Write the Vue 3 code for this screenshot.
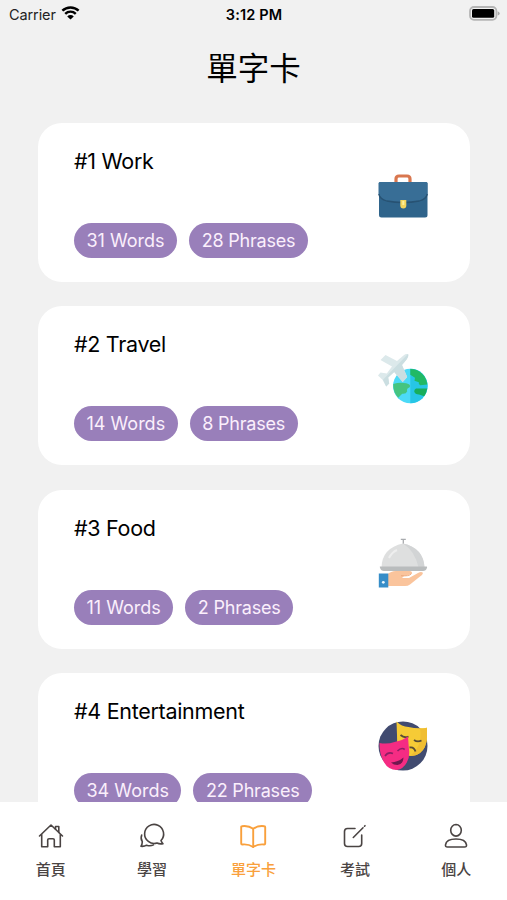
<template>
  <div class="screen">
    <header class="status-bar">
      <div class="status-bar__carrier">
        <span>Carrier</span>
        <svg class="status-bar__wifi" viewBox="0 0 18 14">
          <path d="M1.3 5.3a11.2 11.2 0 0 1 15.4 0" />
          <path d="M4 8.2a7.2 7.2 0 0 1 10 0" />
          <path class="status-bar__dot" d="M9 13.6 5.9 10.7a4.4 4.4 0 0 1 6.2 0z" />
        </svg>
      </div>
      <span class="status-bar__time">3:12 PM</span>
      <svg class="status-bar__battery" viewBox="0 0 31 15">
        <rect x="1" y="1" width="26.4" height="12.8" rx="4" fill="#f2f2f2" stroke="#b5b5b5" stroke-width="1.8" />
        <rect x="3" y="3" width="22.2" height="8.8" rx="1.6" fill="#000" />
        <path d="M28.7 5.2q2 .7 2 2.2t-2 2.2z" fill="#aaa" />
      </svg>
    </header>

    <h1 class="page-title">單字卡</h1>

    <main class="card-list">
      <article v-for="(card, index) in cards" :key="card.name" class="card">
        <div class="card__body">
          <h2 class="card__name">#{{ index + 1 }} {{ card.name }}</h2>
          <div class="card__tags">
            <span class="tag">{{ card.words }} Words</span>
            <span class="tag tag--phrases">{{ card.phrases }} Phrases</span>
          </div>
        </div>

        <svg v-if="card.icon === 'work'" class="card__icon" viewBox="0 0 50 50">
          <path d="M18 11V8q0-3 3-3h8q3 0 3 3v3" fill="none" stroke="#d9774f" stroke-width="3.2" />
          <path d="M2 11h46q1.5 0 1.5 1.5V44q0 2.5-2.5 2.5H3.5Q1 46.5 1 44V12.5Q1 11 2 11z" fill="#2f648b" />
          <path d="M2 11h46q1.5 0 1.5 1.5V23q-1 5-8 7-15 3-33 0-7-2-8-7V12.5Q.5 11 2 11z" fill="#386e96" />
          <path d="M.8 23q1 5 8 7 16 3 32.5 0 7-2 8-7" fill="none" stroke="#275273" stroke-width="1.3" />
          <path d="M22.3 29h6v5.5q0 3-3 3t-3-3z" fill="#f3d45c" />
          <path d="M24.3 30h2v4h-2z" fill="#fff09a" />
        </svg>

        <svg v-else-if="card.icon === 'travel'" class="card__icon" viewBox="0 0 50 50">
          <circle cx="32.3" cy="32" r="17.3" fill="#4cdaf7" />
          <path d="M32.3 14.7a17.3 17.3 0 0 1 0 34.6z" fill="#27c6e6" />
          <path d="M32.3 15a17 17 0 0 1 17 15.5l-7 .8q-2-1-1.5-3l-4.300-1.5.5-3-4.700-3z" fill="#21b965" />
          <path d="M15.200 30q6-2 13-.8 5 1 3.500 4-3.500 1-2.500 4-1 3-5 2.500l-4 4q-5.200-5.500-5-13.700z" fill="#45c480" />
          <path d="M38 34.500h11.200q-.7 4.500-3 7.800l-5.200-1.800q-4-.2-4.800-3 0-2 1.800-3z" fill="#18ae5b" />
          <path d="m2.500 6 5-5 11.500 6L25.500 1.500q3-2.300 4.500-1.500 1 2-1.400 5.500L24 11l5.200 12-4.500 5-8.500-10-6 5.500 1 6-3 3-3.700-6.800L0 21.500l2.500-3 6.300.9 5.200-6.900z" fill="#dce9eb" />
          <path d="m24 11 5.200 12-4.500 5-8.500-10-6 5.500 1 6-3 3-3.200-6.800L30 0q1 2-1.400 5.500z" fill="#cbdee1" />
        </svg>

        <svg v-else-if="card.icon === 'food'" class="card__icon" viewBox="0 0 50 50">
          <path d="M22.800 1.300h5M25.300 1.300v5" stroke="#a8abae" stroke-width="1.300" fill="none" />
          <path d="M3.500 29.500Q4 10 25 5.500q20.500 4.500 21.500 24z" fill="#dedfdf" />
          <path d="M25 5.500q20.500 4.500 21.500 24h-6Q37 13 25 5.500z" fill="#d2d4d5" />
          <path d="M11 20q3-6 8-8" fill="none" stroke="#eee" stroke-width="2" />
          <path d="M2 28.500h46.500q1 0 .5 1.200-1 3.300-4 3.300H6q-3 0-4-3.300-.5-1.200 0-1.200z" fill="#b9bcbd" />
          <path d="M9 36.500q4-3.500 9-3.500h14q3 1 1.800 3L26 38l-2 2h7l9-5q3.500-2 5 0-.5 2-3 3.500L32 46.500q-2 1.500-5 1.500H9z" fill="#fac49c" />
          <path d="M23 37.700q8 .7 10-1.700" stroke="#eca97e" stroke-width="1" fill="none" />
          <path d="M.8 35.500h9.500v14H.8z" fill="#368dc8" />
          <circle cx="5.300" cy="44.300" r="1.400" fill="#eaf7ff" />
        </svg>

        <svg v-else class="card__icon" viewBox="0 0 50 50">
          <circle cx="25" cy="25" r="24.500" fill="#414b70" />
          <path d="M18.500 .5q5 5 12 5.500 9 2 18.500.7L49 16q-.5 11-7 16-4 3-10 3-8-1-11.500-9-2-5-1.500-12z" fill="#f6cb36" />
          <path d="M42 7.300q4 .3 7-.6L49 16q-.5 11-7 16-4 3-10 3 13-10 10-27.700z" fill="#f0be32" />
          <path d="M22.500 14q4 3.500 8 1.500M36 19q3.500 2.500 7.500 .5M31.500 26.500q4.500-1 6 4" fill="none" stroke="#594c35" stroke-width="1.800" />
          <path d="M1.500 22q8 1.500 15-1 8-1.500 13.500-5.500l.8 11q1.500 9-2 15-3.500 6.500-10 7.500-9 0-13.500-9-4-8-3.800-18z" fill="#f52c83" />
          <path d="M7 35q3-4.500 8-2.500M19.500 30q4-4 7.200-1.500" fill="none" stroke="#8d1f65" stroke-width="1.600" />
          <path d="M13 41.500q7-.3 12.500-5-.5 7-6 7.500-4 0-6.500-2.500z" fill="#71174f" />
        </svg>
      </article>
    </main>

    <nav class="tab-bar">
      <a v-for="tab in tabs" :key="tab.label" class="tab" :class="{ 'is-active': tab.active }">
        <svg class="tab__icon" viewBox="0 0 28 28">
          <path v-for="d in tab.paths" :key="d" :d="d" />
        </svg>
        <span>{{ tab.label }}</span>
      </a>
    </nav>
  </div>
</template>

<script setup>
const cards = [
  { name: 'Work', words: 31, phrases: 28, icon: 'work' },
  { name: 'Travel', words: 14, phrases: 8, icon: 'travel' },
  { name: 'Food', words: 11, phrases: 2, icon: 'food' },
  { name: 'Entertainment', words: 34, phrases: 22, icon: 'entertainment' },
]

const tabs = [
  {
    label: '首頁',
    paths: [
      'M2.5 14 14 3l11.5 11M4.7 12v12.8h6V18q0-1.300 1.300-1.300h4q1.300 0 1.300 1.300v6.800h6V12',
      'M18.5 7.200V4.500h3.300v6',
    ],
  },
  {
    label: '學習',
    paths: [
      'M23 18.5A9.500 9.500 0 1 0 19 21q2.500 1.300 6 .7-1.500-1.500-2-3.200z',
      'M3.700 13q-1.400 3.500.6 6.700-.1 3-1.300 4.600 3.500.3 5.600-1.100 3.700 1.300 6.900-.3',
    ],
  },
  {
    label: '單字卡',
    active: true,
    paths: [
      'M13.200 6.800Q8.500 3.300 2 4.200q-.8 0-.8 1v16.300q0 1 1 1 6-.7 11 2.500 5-3.200 11-2.500 1 0 1-1V5.200q0-1-.8-1-6.500-.9-11.200 2.600z',
      'M13.200 6.800V25',
    ],
  },
  {
    label: '考試',
    paths: [
      'M14 6.500H6.500q-3 0-3 3v12q0 3 3 3h11.200q3 0 3-3V13',
      'M12.300 15.500 22 5.800M23.500 4.200l.5-.5',
    ],
  },
  {
    label: '個人',
    paths: [
      'M14 2.500a5.300 5.800 0 0 1 0 11.600A5.300 5.800 0 0 1 14 2.500z',
      'M5.500 25q-2.300 0-2-2.200.9-5.800 10.500-5.800t10.500 5.800q.3 2.200-2 2.200z',
    ],
  },
]
</script>

<style>
body {
  background: #f2f2f2;
}
</style>

<style scoped>
.screen {
  display: flex;
  flex-direction: column;
  height: 900px;
  overflow: hidden;
  background: #f1f1f1;
  color: #000;
  font-family: Inter, 'Noto Sans CJK TC', sans-serif;
}

.status-bar {
  display: grid;
  grid-template-columns: 1fr auto 1fr;
  align-items: center;
  flex: none;
  height: 28px;
  padding: 0 7px 0 9px;
  font-size: 14.5px;
}

.status-bar__carrier {
  display: flex;
  align-items: center;
  gap: 5px;
  color: #222;
  letter-spacing: -0.1px;
}

.status-bar__wifi {
  width: 19px;
  height: 15px;
  margin-top: -3px;
  fill: none;
  stroke: #000;
  stroke-width: 2.3;
}

.status-bar__dot {
  fill: #000;
  stroke: none;
}

.status-bar__time {
  margin-right: 1px;
  font-weight: 600;
  letter-spacing: 0.15px;
}

.status-bar__battery {
  justify-self: end;
  width: 31px;
  height: 15px;
  margin-top: -1px;
}

.page-title {
  flex: none;
  height: 95px;
  margin: 0;
  font-size: 31.5px;
  font-weight: 400;
  line-height: 81px;
  text-align: center;
}

.card-list {
  display: flex;
  flex: 1;
  flex-direction: column;
  gap: 24.3px;
  min-height: 0;
  padding: 0 37px 0 38px;
  overflow: hidden;
}

.card {
  display: flex;
  flex: none;
  align-items: center;
  justify-content: space-between;
  box-sizing: border-box;
  height: 159px;
  padding: 24px 42px 24px 36px;
  border-radius: 24px;
  background: #fff;
}

.card__body {
  display: flex;
  flex-direction: column;
  justify-content: space-between;
  height: 100%;
}

.card__name {
  margin: 0;
  font-size: 21.5px;
  font-weight: 400;
  letter-spacing: -0.3px;
  line-height: 28px;
}

.card__tags {
  display: flex;
  gap: 12px;
}

.tag {
  height: 35px;
  padding: 0 12.5px;
  border-radius: 18px;
  background: #997fba;
  color: #fbeffc;
  font-size: 18px;
  line-height: 35px;
  white-space: nowrap;
}

.tag--phrases {
  letter-spacing: -0.2px;
}

.card__icon {
  width: 50px;
  height: 50px;
  margin-bottom: 13px;
}

.tab-bar {
  display: flex;
  flex: none;
  height: 98px;
  background: #fff;
}

.tab {
  display: flex;
  flex: 1;
  flex-direction: column;
  align-items: center;
  padding-top: 20px;
  color: #4a4443;
  font-size: 15px;
  font-weight: 500;
  line-height: 22px;
}

.tab.is-active {
  color: #f9a03c;
}

.tab__icon {
  width: 28px;
  height: 28px;
  margin-bottom: 9px;
  fill: none;
  stroke: currentColor;
  stroke-width: 1.6;
  stroke-linecap: round;
  stroke-linejoin: round;
}

.tab.is-active .tab__icon {
  stroke-width: 1.9;
}
</style>
